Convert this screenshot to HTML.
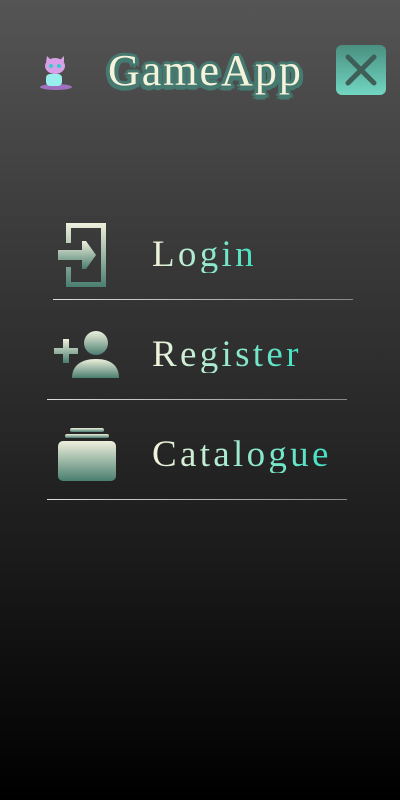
<!DOCTYPE html>
<html><head><style>
body{margin:0;width:400px;height:800px;overflow:hidden;background:linear-gradient(#555 0%,#3a3a3a 30%,#1a1a1a 70%,#000 100%);font-family:"Liberation Serif",serif;position:relative}
.t{position:absolute;left:108px;top:45px;font-size:44px;color:#f5f3dc;letter-spacing:2px;
text-shadow:3px 0 #467a70,-3px 0 #467a70,0 3px #467a70,0 -3px #467a70,2px 2px #467a70,-2px 2px #467a70,2px -2px #467a70,-2px -2px #467a70,4px 1px #467a70,-4px 1px #467a70,1px 4px #467a70,4px 3px #467a70,-3px 4px #467a70,0 5px #467a70}
.x{position:absolute;left:336px;top:45px;width:50px;height:50px;border-radius:6px;background:linear-gradient(#4a8f80,#72d6c2)}
.m{position:absolute;left:152px;font-size:37px;letter-spacing:3.3px;background:linear-gradient(90deg,#f5f3dc,#3ee0c0);-webkit-background-clip:text;background-clip:text;color:transparent;line-height:1}
.l{position:absolute;height:1px;background:linear-gradient(90deg,#ddd,#888)}
svg{position:absolute}
</style></head><body>
<svg style="left:34px;top:54px" width="44" height="38" viewBox="0 0 44 38">
<ellipse cx="22" cy="33" rx="16" ry="3" fill="#a070c0"/>
<rect x="12" y="20" width="16" height="12" rx="4" fill="#9ee"/>
<ellipse cx="21" cy="12" rx="10" ry="8" fill="#d9a0e8"/>
<path d="M12 8 L13 2 L17 6Z M26 6 L30 2 L30 8Z" fill="#d9a0e8"/>
<circle cx="17" cy="12" r="2" fill="#3cc"/><circle cx="25" cy="12" r="2" fill="#3cc"/>
</svg>
<div class="t">GameApp</div>
<div class="x"><svg width="50" height="50" viewBox="0 0 50 50" style="position:static"><path d="M12 12L38 38M38 12L12 38" stroke="#3d5f58" stroke-width="5" stroke-linecap="round"/></svg></div>

<svg style="left:58px;top:223px" width="52" height="64" viewBox="0 0 52 64">
<defs><linearGradient id="g" x1="0" y1="0" x2="0" y2="1"><stop offset="0" stop-color="#eef0dc"/><stop offset="1" stop-color="#4a7e70"/></linearGradient></defs>
<path d="M8 0H48V64H8V44H13V59H43V5H13V20H8Z" fill="url(#g)"/>
<path d="M0 27H24V18H28L38 32L28 46H24V37H0Z" fill="url(#g)"/>
</svg>
<div class="m" style="top:236px">Login</div>
<div class="l" style="left:53px;width:300px;top:299px"></div>

<svg style="left:54px;top:331px" width="66" height="48" viewBox="0 0 66 48">
<defs><linearGradient id="g2" x1="0" y1="0" x2="0" y2="1"><stop offset="0" stop-color="#eef0dc"/><stop offset="1" stop-color="#4a7e70"/></linearGradient></defs>
<circle cx="42" cy="12" r="12" fill="url(#g2)"/>
<path d="M18 47C18 34 28 28 42 28C56 28 65 34 65 47Z" fill="url(#g2)"/>
<path d="M0 17H9V8H15V17H24V23H15V32H9V23H0Z" fill="url(#g2)"/>
</svg>
<div class="m" style="top:336px">Register</div>
<div class="l" style="left:47px;width:300px;top:399px"></div>

<svg style="left:58px;top:428px" width="58" height="54" viewBox="0 0 58 54">
<defs><linearGradient id="g3" x1="0" y1="0" x2="0" y2="1"><stop offset="0" stop-color="#eef0dc"/><stop offset="1" stop-color="#4a7e70"/></linearGradient></defs>
<rect x="12" y="0" width="34" height="4" rx="2" fill="url(#g3)"/>
<rect x="7" y="6" width="44" height="4" rx="2" fill="url(#g3)"/>
<rect x="0" y="13" width="58" height="40" rx="5" fill="url(#g3)"/>
</svg>
<div class="m" style="top:436px">Catalogue</div>
<div class="l" style="left:47px;width:300px;top:499px"></div>
</body></html>
